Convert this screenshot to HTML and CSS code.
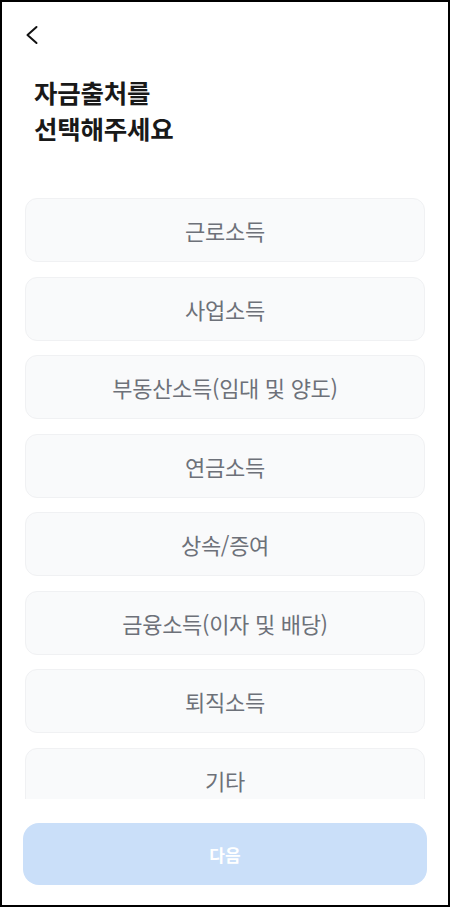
FILE: index.html
```html
<!DOCTYPE html>
<html lang="ko">
<head>
<meta charset="utf-8">
<title>자금출처 선택</title>
<link rel="stylesheet" href="styles.css">
</head>
<body>
<div class="frame">
  <header class="header">
    <button class="back" aria-label="뒤로">
      <svg width="24" height="24" viewBox="0 0 24 24" fill="none" stroke="#111" stroke-width="2" stroke-linecap="round" stroke-linejoin="round"><path d="M16.5 4 L7.5 12 L16.5 20"/></svg>
    </button>
  </header>
  <h1 class="title">자금출처를<br>선택해주세요</h1>
  <div class="list">
    <div class="option">근로소득</div>
    <div class="option">사업소득</div>
    <div class="option">부동산소득(임대 및 양도)</div>
    <div class="option">연금소득</div>
    <div class="option">상속/증여</div>
    <div class="option">금융소득(이자 및 배당)</div>
    <div class="option">퇴직소득</div>
    <div class="option">기타</div>
  </div>
  <footer class="footer">
    <button class="next">다음</button>
  </footer>
</div>
</body>
</html>
```
FILE: styles.css
```css
* { box-sizing: border-box; }
html, body { margin: 0; padding: 0; background: #fff; }
body { font-family: "Noto Sans CJK KR", "Noto Sans", sans-serif; }
.frame {
  width: 450px;
  height: 907px;
  border: 2px solid #000;
  background: #fff;
  display: flex;
  flex-direction: column;
  overflow: hidden;
}
.header {
  height: 45px;
  padding: 21px 0 0 18px;
  flex: none;
}
.back {
  display: block;
  width: 24px;
  height: 24px;
  padding: 0;
  border: 0;
  background: none;
}
.back svg { display: block; }
.title {
  margin: 27px 0 0;
  padding-left: 32px;
  font-size: 25.5px;
  line-height: 36px;
  font-weight: 700;
  color: #191919;
  letter-spacing: -0.2px;
  flex: none;
}
.list {
  flex: 1;
  min-height: 0;
  overflow: hidden;
  padding: 52px 23px 0;
  display: flex;
  flex-direction: column;
  gap: 14.5px;
}
.option {
  flex: none;
  height: 64px;
  border: 1px solid #f0f1f3;
  border-radius: 12px;
  background: #f9fafb;
  display: flex;
  align-items: center;
  justify-content: center;
  font-size: 22px;
  color: #6d7179;
  letter-spacing: -0.3px;
}
.footer {
  flex: none;
  padding: 24px 21px 20px;
}
.next {
  display: block;
  width: 100%;
  height: 62px;
  border: 0;
  border-radius: 16px;
  background: #cadff9;
  color: #fff;
  font-family: inherit;
  font-size: 17px;
  font-weight: 700;
}
```
